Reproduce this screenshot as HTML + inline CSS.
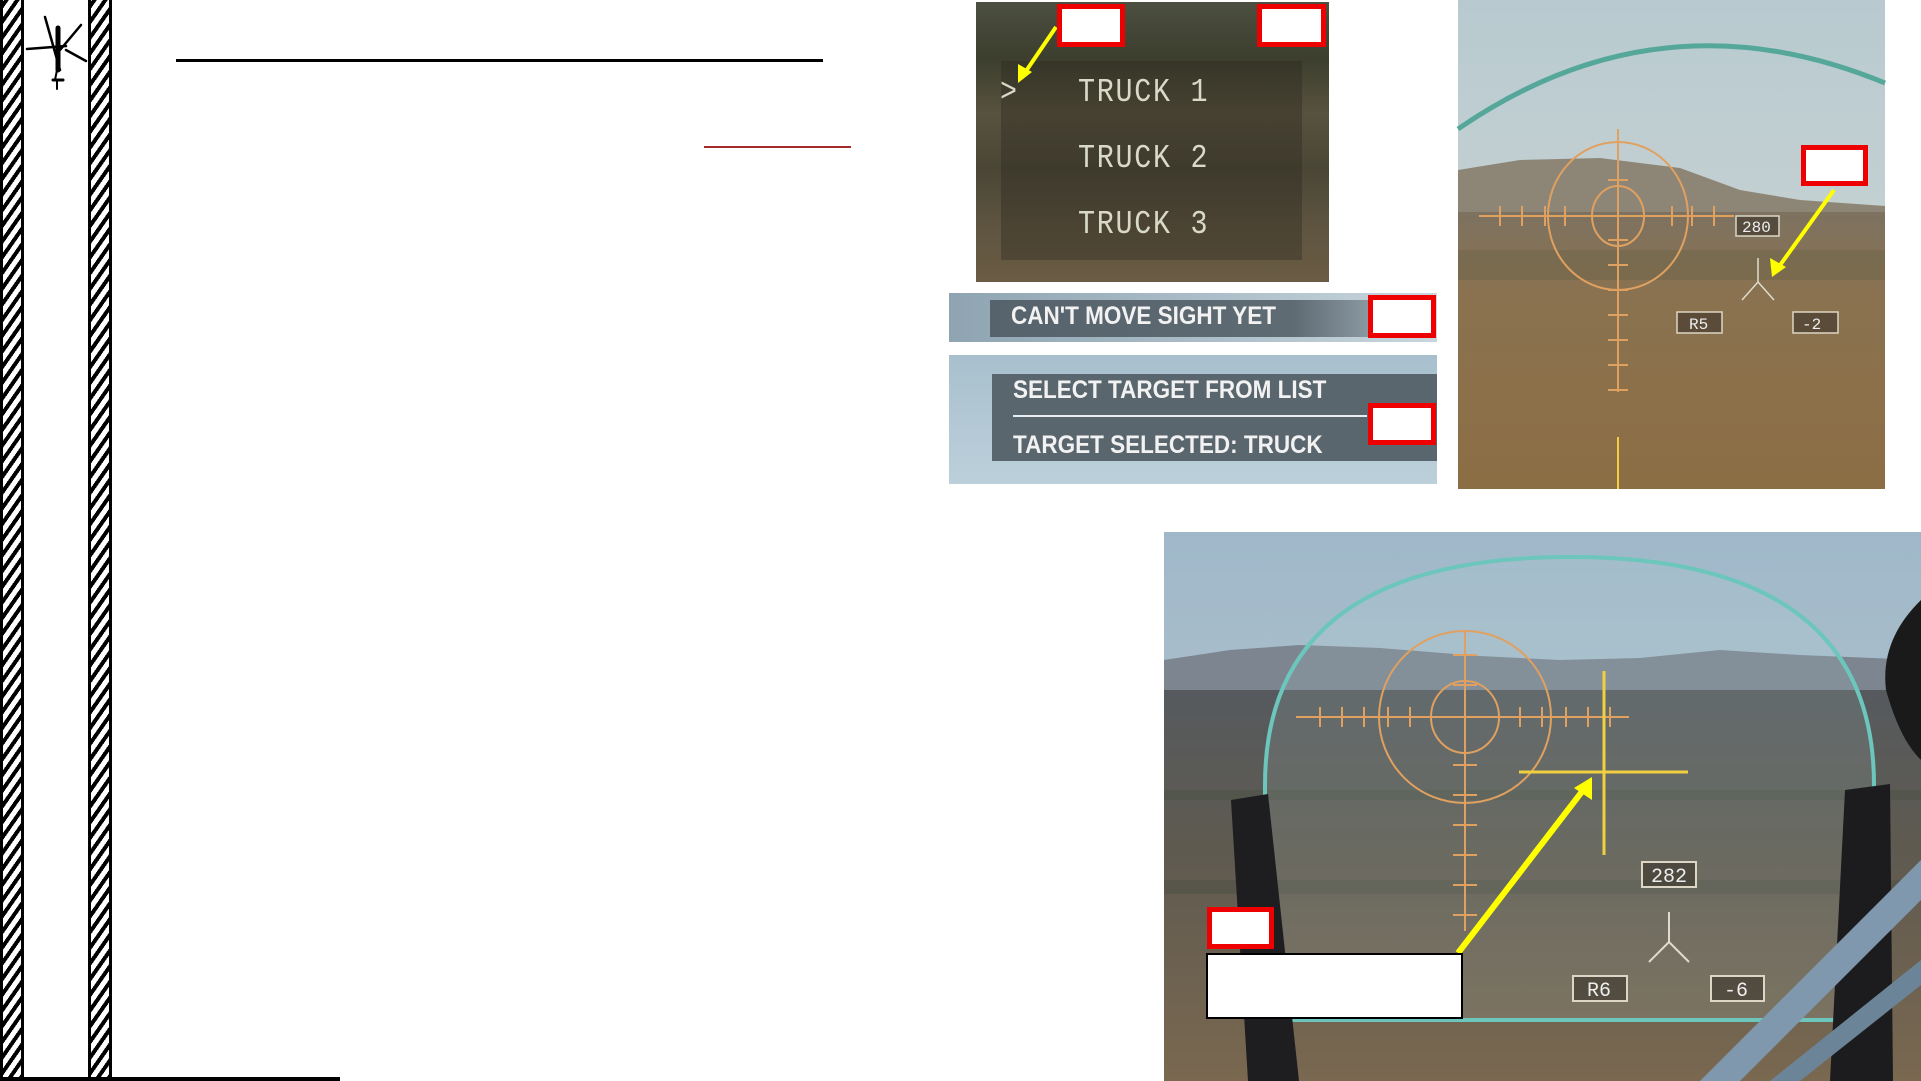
<!DOCTYPE html>
<html><head><meta charset="utf-8"><style>
html,body{margin:0;padding:0;width:1921px;height:1081px;overflow:hidden;background:#fff;position:relative;font-family:"Liberation Sans",sans-serif}
.bar{position:absolute;top:0;height:1081px;box-sizing:border-box;border-left:3px solid #000;border-right:3px solid #000;
background:repeating-linear-gradient(-55deg,#000 0 4px,#fff 4px 9px)}
.abs{position:absolute}
.rb{position:absolute;box-sizing:border-box;border:5px solid #e00;background:#fff}
.t{position:absolute;font-family:"Liberation Sans",sans-serif;font-weight:bold;color:#f2f2f2;white-space:nowrap;transform:scaleX(0.9);transform-origin:left}
.tr{position:absolute;font-family:"Liberation Mono",monospace;color:#d9d9c8;font-size:33px;transform:scaleX(0.86);transform-origin:left;letter-spacing:2px}
</style></head><body>
<div class="bar" style="left:0;width:24px"></div>
<div class="bar" style="left:88px;width:24px"></div>
<div class="abs" style="left:0;top:1077px;width:340px;height:4px;background:#000"></div>
<svg class="abs" style="left:20px;top:10px" width="80" height="85" viewBox="0 0 80 85">
<g stroke="#000" stroke-linecap="round">
<line x1="25" y1="7" x2="40" y2="60" stroke-width="2.5"/>
<line x1="61" y1="15" x2="40" y2="40" stroke-width="2.5"/>
<line x1="7" y1="39" x2="46" y2="36" stroke-width="2.5"/>
<line x1="46" y1="40" x2="66" y2="51" stroke-width="2.5"/>
<line x1="38" y1="18" x2="38" y2="60" stroke-width="5"/>
<line x1="38" y1="55" x2="35" y2="70" stroke-width="2"/>
<line x1="33" y1="70" x2="43" y2="70" stroke-width="3"/>
<line x1="37" y1="70" x2="37" y2="79" stroke-width="2"/>
</g></svg>
<div class="abs" style="left:176px;top:59px;width:647px;height:3px;background:#000"></div>
<div class="abs" style="left:704px;top:146px;width:147px;height:2px;background:#a52a2a"></div>

<!-- truck image -->
<div class="abs" style="left:976px;top:2px;width:353px;height:280px;background:linear-gradient(180deg,#4c5040 0%,#3c3e2e 20%,#57523e 40%,#4a4636 60%,#5e5440 80%,#6a5c44 100%)"></div>
<div class="abs" style="left:1001px;top:61px;width:301px;height:199px;background:rgba(40,38,30,0.35)"></div>
<div class="tr" style="left:1000px;top:74px">&gt;</div>
<div class="tr" style="left:1078px;top:74px">TRUCK 1</div>
<div class="tr" style="left:1078px;top:140px">TRUCK 2</div>
<div class="tr" style="left:1078px;top:206px">TRUCK 3</div>

<!-- can't move -->
<div class="abs" style="left:949px;top:293px;width:488px;height:49px;background:linear-gradient(90deg,#8fa4b2,#a9bcc7 50%,#c9d6dd)"></div>
<div class="abs" style="left:990px;top:300px;width:379px;height:37px;background:linear-gradient(90deg,#56636c,#5f6b73 80%,#8a98a2)"></div>
<div class="t" style="left:1011px;top:302px;font-size:25px">CAN'T MOVE SIGHT YET</div>

<!-- select panel -->
<div class="abs" style="left:949px;top:355px;width:488px;height:129px;background:linear-gradient(180deg,#a8c0cd,#bcd0db)"></div>
<div class="abs" style="left:992px;top:374px;width:445px;height:87px;background:#5a666e"></div>
<div class="t" style="left:1013px;top:376px;font-size:25px">SELECT TARGET FROM LIST</div>
<div class="abs" style="left:1013px;top:415px;width:354px;height:2px;background:#e8eef2"></div>
<div class="t" style="left:1013px;top:431px;font-size:25px">TARGET SELECTED: TRUCK</div>

<svg class="abs" style="left:0;top:0" width="1921" height="1081" viewBox="0 0 1921 1081">
<defs>
<linearGradient id="sk1" x1="0" y1="0" x2="0" y2="1"><stop offset="0" stop-color="#b8cad0"/><stop offset="1" stop-color="#d2d8d4"/></linearGradient>
<linearGradient id="gr1" x1="0" y1="0" x2="0" y2="1"><stop offset="0" stop-color="#7d7260"/><stop offset="0.3" stop-color="#8a7250"/><stop offset="1" stop-color="#8c6e44"/></linearGradient>
<linearGradient id="sk2" x1="0" y1="0" x2="0" y2="1"><stop offset="0" stop-color="#9fb8c9"/><stop offset="1" stop-color="#c0cad0"/></linearGradient>
<linearGradient id="gr2" x1="0" y1="0" x2="0" y2="1"><stop offset="0" stop-color="#565a5e"/><stop offset="0.4" stop-color="#5e5a50"/><stop offset="1" stop-color="#7a6850"/></linearGradient>
</defs>
<!-- top right image -->
<rect x="1458" y="0" width="427" height="489" fill="url(#sk1)"/>
<path d="M1458,170 L1520,160 L1600,158 L1680,168 L1740,190 L1800,200 L1885,206 L1885,489 L1458,489Z" fill="#8d8676"/>
<rect x="1458" y="212" width="427" height="277" fill="url(#gr1)"/>
<rect x="1458" y="250" width="427" height="30" fill="#6d6448" opacity="0.5"/>
<path d="M1458,129 Q1660,-10 1885,83" fill="none" stroke="#55a79a" stroke-width="5"/>
<g stroke="#e0a060" fill="none" stroke-width="2">
<ellipse cx="1618" cy="216" rx="70" ry="74"/><ellipse cx="1618" cy="216" rx="26" ry="30"/>
<line x1="1479" y1="216" x2="1734" y2="216"/><line x1="1618" y1="129" x2="1618" y2="392"/>
<path d="M1500,206v20M1522,206v20M1545,206v20M1565,206v20M1672,206v20M1692,206v20M1714,206v20M1608,240h20M1608,265h20M1608,290h20M1608,315h20M1608,340h20M1608,365h20M1608,390h20M1608,180h20"/>
</g>
<line x1="1618" y1="437" x2="1618" y2="489" stroke="#f0d040" stroke-width="2"/>
<g fill="#3a342a" fill-opacity="0.6" stroke="#ddd6c4" stroke-width="1.5">
<rect x="1736" y="216" width="43" height="20"/><rect x="1677" y="312" width="45" height="21"/><rect x="1793" y="312" width="45" height="21"/></g>
<g fill="#eee" font-family="Liberation Mono,monospace" font-size="16"><text x="1742" y="232">280</text><text x="1689" y="329">R5</text><text x="1802" y="329">-2</text></g>
<path d="M1758,258v24M1758,282l-16,18M1758,282l16,18" stroke="#e0dccc" stroke-width="1.5" fill="none"/>
<line x1="1834" y1="190" x2="1778" y2="268" stroke="#ffff00" stroke-width="4"/>
<polygon points="1772,277 1770,258 1786,267" fill="#ffff00"/>
<!-- truck arrow -->
<line x1="1056" y1="27" x2="1024" y2="74" stroke="#ffff00" stroke-width="4"/>
<polygon points="1018,83 1018,64 1032,72" fill="#ffff00"/>

<!-- bottom image -->
<rect x="1164" y="532" width="757" height="549" fill="url(#sk2)"/>
<path d="M1164,660 L1230,650 L1300,645 L1380,648 L1480,656 L1560,660 L1640,658 L1720,650 L1800,655 L1921,660 L1921,700 L1164,700Z" fill="#7c8590"/>
<rect x="1164" y="690" width="757" height="391" fill="url(#gr2)"/>
<rect x="1164" y="790" width="757" height="10" fill="#4f5448" opacity="0.6"/>
<rect x="1164" y="880" width="757" height="14" fill="#4d5044" opacity="0.5"/>
<path d="M1265,785 Q1265,557 1570,557 Q1874,557 1874,785 L1874,1017 L1831,1020 L1292,1020 L1265,1017Z" fill="#bfe0e0" fill-opacity="0.12" stroke="#6cc6bc" stroke-width="4"/>
<g stroke="#e0a060" fill="none" stroke-width="2">
<ellipse cx="1465" cy="717" rx="86" ry="86"/><ellipse cx="1465" cy="717" rx="34" ry="36"/>
<line x1="1296" y1="717" x2="1629" y2="717"/><line x1="1465" y1="631" x2="1465" y2="931"/>
<path d="M1320,707v20M1342,707v20M1364,707v20M1388,707v20M1410,707v20M1520,707v20M1542,707v20M1566,707v20M1588,707v20M1610,707v20M1453,655h24M1453,685h24M1453,765h24M1453,795h24M1453,825h24M1453,855h24M1453,885h24M1453,915h24"/>
</g>
<g stroke="#f0d040" stroke-width="3"><line x1="1604" y1="671" x2="1604" y2="855"/><line x1="1519" y1="772" x2="1688" y2="772"/></g>
<g fill="#3a342a" fill-opacity="0.6" stroke="#ddd6c4" stroke-width="2">
<rect x="1642" y="862" width="54" height="25"/><rect x="1573" y="976" width="54" height="25"/><rect x="1711" y="976" width="53" height="25"/></g>
<g fill="#eee" font-family="Liberation Mono,monospace" font-size="20"><text x="1651" y="882">282</text><text x="1587" y="996">R6</text><text x="1724" y="996">-6</text></g>
<path d="M1669,912v30M1669,942l-20,20M1669,942l20,20" stroke="#e0dccc" stroke-width="2" fill="none"/>
<line x1="1458" y1="953" x2="1584" y2="789" stroke="#ffff00" stroke-width="6"/>
<polygon points="1592,777 1574,788 1592,800" fill="#ffff00"/>
<!-- frame posts -->
<path d="M1231,800 L1268,794 L1299,1081 L1248,1081Z" fill="#1e1e20"/>
<path d="M1845,790 L1890,784 L1893,1081 L1830,1081Z" fill="#1c1c1e"/>
<path d="M1700,1081 L1921,860 L1921,900 L1740,1081Z" fill="#7f98ad"/>
<path d="M1770,1081 L1921,960 L1921,985 L1800,1081Z" fill="#6c8498"/>
<path d="M1921,600 Q1880,640 1886,690 Q1900,740 1921,760Z" fill="#1a1a1a"/>
</svg>

<div class="rb" style="left:1057px;top:4px;width:68px;height:43px"></div>
<div class="rb" style="left:1257px;top:4px;width:69px;height:43px"></div>
<div class="rb" style="left:1368px;top:295px;width:68px;height:43px"></div>
<div class="rb" style="left:1368px;top:403px;width:68px;height:42px"></div>
<div class="rb" style="left:1801px;top:145px;width:67px;height:41px"></div>
<div class="rb" style="left:1207px;top:907px;width:67px;height:42px"></div>
<div class="abs" style="left:1206px;top:953px;width:257px;height:66px;box-sizing:border-box;border:2px solid #000;background:#fff"></div>
</body></html>
